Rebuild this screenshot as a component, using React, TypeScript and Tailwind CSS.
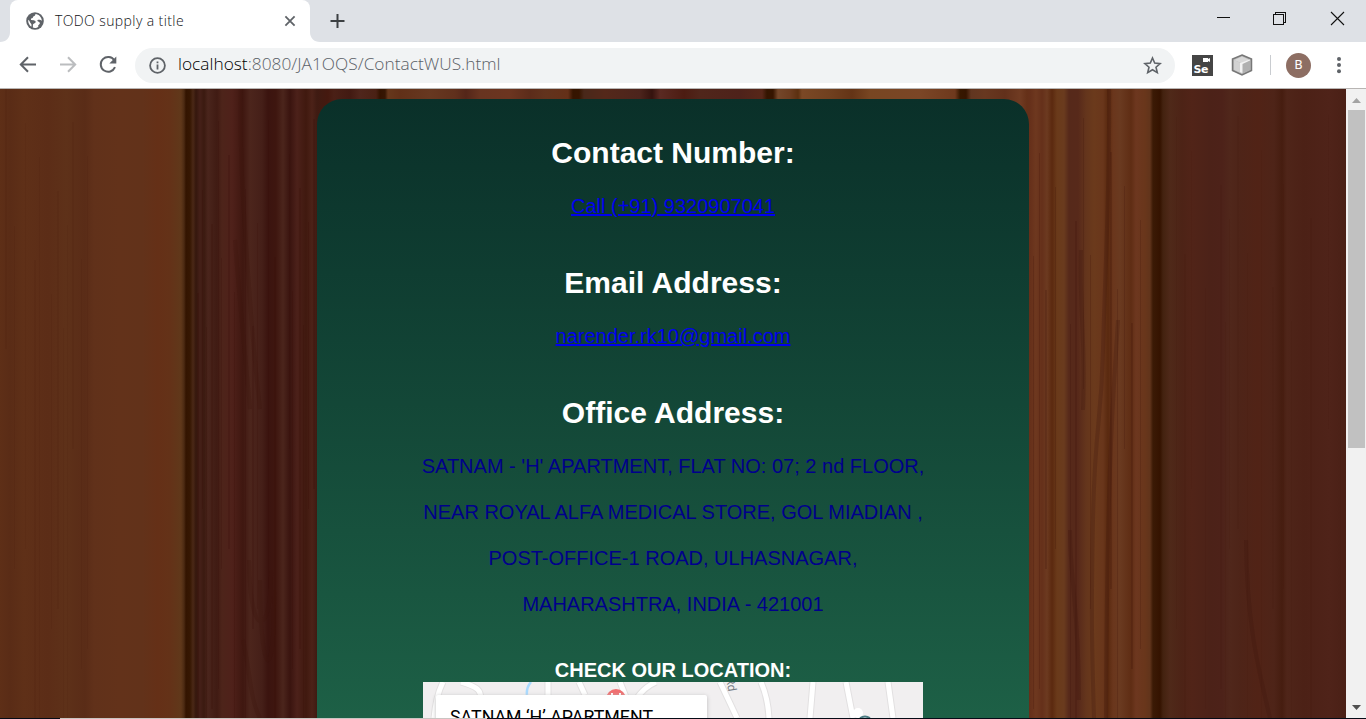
import React from "react";

type Stripe = [x: number, color: string];

const grain: Stripe[] = [
  [0, "#5e2f17"], [10, "#5a2c16"], [24, "#5f3018"], [48, "#5c2d17"], [66, "#5e3119"], [85, "#5a2c17"],
  [94, "#61311a"], [120, "#63321a"], [142, "#62321a"], [158, "#653017"], [170, "#643218"], [181, "#60381a"],
  [184, "#4c2a12"], [186, "#331400"], [190, "#361702"], [193, "#4a2816"], [196, "#35170d"], [200, "#452018"],
  [204, "#3b1a10"], [208, "#4a251c"], [217, "#401b13"], [222, "#4d241a"], [232, "#4f211a"], [243, "#3f1710"],
  [250, "#4c251c"], [262, "#451f18"], [268, "#3b140f"], [276, "#3e160f"], [283, "#4b251c"], [290, "#3a140f"],
  [297, "#4c211a"], [306, "#40190f"], [312, "#4c2218"], [317, "#3f1b12"],
  [328, "#45190f"], [334, "#4a2016"], [350, "#421a12"], [360, "#4f261c"], [376, "#4a2114"], [380, "#331300"],
  [385, "#361704"], [388, "#66381c"], [400, "#613018"], [430, "#673820"], [455, "#60301c"], [466, "#542619"],
  [480, "#683420"], [510, "#6c3520"], [530, "#5c2c1a"], [545, "#62331d"], [568, "#653018"], [573, "#351500"],
  [579, "#361500"], [584, "#49281a"], [605, "#54281a"], [640, "#4c241c"], [652, "#35130e"], [660, "#5a2a22"],
  [684, "#4c1c12"], [700, "#50261b"], [740, "#4e221a"], [762, "#572719"], [767, "#341500"], [773, "#361500"],
  [778, "#74472a"], [790, "#6c3d20"], [798, "#5c3010"], [802, "#7b4825"], [830, "#70401f"], [852, "#643416"],
  [870, "#784622"], [920, "#7b4626"], [955, "#6e391d"], [960, "#371800"], [966, "#351500"], [971, "#613620"],
  [985, "#683820"], [1005, "#62301b"], [1020, "#703b22"], [1027, "#653018"],
  [1030, "#66301a"], [1036, "#6e381f"], [1042, "#65301a"], [1047, "#6c3a20"], [1052, "#5b290f"],
  [1057, "#6a3a1a"], [1064, "#6a3b1e"], [1069, "#56291a"], [1078, "#57291a"], [1086, "#64351c"],
  [1094, "#6b3a1c"], [1103, "#69361b"], [1108, "#59290f"], [1113, "#6a361c"], [1120, "#6a3a20"],
  [1131, "#5f2d14"], [1136, "#6d371f"], [1145, "#69361b"], [1150, "#61341b"], [1153, "#3b1a05"],
  [1160, "#351300"], [1163, "#43220f"], [1170, "#4f2919"], [1182, "#4d2316"], [1192, "#512418"],
  [1210, "#4c2218"], [1222, "#4d2219"], [1230, "#50271b"], [1240, "#4e2418"], [1258, "#512316"],
  [1274, "#4e2418"], [1282, "#461d10"], [1287, "#4f2519"], [1304, "#4c2116"], [1330, "#4f2319"], [1346, "#4a2016"],
];

const fineLines = [
  5, 14, 25, 34, 39, 51, 57, 63, 67, 72, 81, 87, 197, 202, 206, 211, 218, 221, 228, 234, 245, 252, 257, 268, 274,
  289, 292, 299, 303, 308, 313, 1033, 1039, 1045, 1055, 1070, 1075, 1083, 1090, 1110, 1117, 1124, 1131, 1140,
  1176, 1184, 1191, 1205, 1220, 1225, 1229, 1237, 1247, 1261, 1272, 1283, 1291, 1310, 1328, 1340,
];

const knots = [
  "M241 88C239 160 245 230 250 300S257 380 260 409",
  "M235 240C240 310 246 360 250 409",
  "M271 570C272 635 250 645 249 560M260 580C260 680 275 690 274 590",
  "M243 640C250 670 250 700 260 718",
  "M1109 88C1110 190 1105 270 1103 350S1095 420 1093 520S1092 650 1094 718",
  "M1118 320C1114 390 1107 450 1106 718",
  "M1081 250C1079 310 1086 340 1083 410",
  "M1070 530C1070 580 1079 610 1079 700",
  "M1246 540C1247 620 1256 660 1270 718",
];

function WoodBackdrop() {
  return (
    <svg className="col-start-1 row-start-1 block h-[629px] w-[1346px]" viewBox="0 89 1346 629" aria-hidden="true">
      <defs>
        <linearGradient id="grain" gradientUnits="userSpaceOnUse" x1="0" y1="0" x2="1346" y2="0">
          {grain.map(([x, color]) => (
            <stop key={x} offset={x / 1346} stopColor={color} />
          ))}
        </linearGradient>
      </defs>
      <rect y="89" width="1346" height="629" fill="url(#grain)" />
      {fineLines.map((x, i) => (
        <rect key={x} x={x} y={89 + ((i * 137) % 240)} width={i % 3 ? 1 : 2} height={260 + ((i * 83) % 340)} fill="#3a0d05" opacity={x < 180 || x > 1165 ? 0.08 : 0.18} />
      ))}
      {knots.map((d) => (
        <path key={d} d={d} fill="none" stroke="#3a120a" strokeWidth="4" opacity="0.25" />
      ))}
    </svg>
  );
}

function TabStrip() {
  return (
    <header className="flex h-[42px] items-start bg-[#dee1e6]">
      <svg className="h-[42px] w-[10px]" viewBox="0 0 10 42"><path d="M10 32V42H0C6 42 10 38 10 32Z" fill="#fff" /></svg>
      <div className="flex h-[42px] w-[300px] items-center rounded-t-[8px] bg-white pb-px pl-4">
        <svg className="h-[18px] w-[18px]" viewBox="0 0 18 18">
          <circle cx="9" cy="9" r="8.8" fill="#5f6368" />
          <path d="M9.4 2C9.5 4.3 7.2 3.8 7 5.2C6.9 6.6 4.9 5.8 4.9 7.3C4.9 8.7 8.5 7.9 9.4 9.1C10.3 10.4 8.9 11.5 7.7 11.7C6.4 12 7.2 14.4 6.8 15.6C8.5 16.3 11 16 12.4 14.7C11.4 13.1 13.6 12.7 13.9 11.3C14.1 9.9 12.2 10 11.5 9C10.8 7.8 12.9 7.3 14.6 8.1L15.9 8.7C15.6 5.3 13 2.3 9.4 2ZM2.2 7.8C1.8 10.7 3.4 13.5 5.3 14.7C5.7 13.2 5.7 12.1 4.7 11.3C3.8 10.5 3.8 8.5 2.2 7.8Z" fill="#fff" />
        </svg>
        <span className="ml-[11px] w-[229px] whitespace-nowrap pb-px font-['Open_Sans',sans-serif] text-[14px] font-light tracking-[0.4px] text-[#101316]">TODO supply a title</span>
        <svg className="h-[12px] w-[12px] shrink-0" viewBox="0 0 12 12"><path d="M1.4 1.4L10.6 10.6M10.6 1.4L1.4 10.6" stroke="#5f6368" strokeWidth="1.8" /></svg>
      </div>
      <svg className="h-[42px] w-[10px]" viewBox="0 0 10 42"><path d="M0 32V42H10C4 42 0 38 0 32Z" fill="#fff" /></svg>
      <svg className="mt-[13px] ml-[10px] h-4 w-4" viewBox="0 0 16 16"><path d="M7.5 1V15M.5 8H14.5" stroke="#3c4043" strokeWidth="2" /></svg>
      <div className="ml-auto flex">
        <svg className="h-[36px] w-[150px]" viewBox="1216 0 150 36" fill="none" stroke="#111" shapeRendering="crispEdges">
          <path d="M1217 17.5H1230" />
          <path d="M1273.5 14.5H1283.5V24.5H1273.5ZM1275.5 14V12.5H1285.5V22.5H1284" />
          <path d="M1331 12L1344 25M1344 12L1331 25" shapeRendering="auto" strokeWidth="1.1" />
        </svg>
      </div>
    </header>
  );
}

function Toolbar() {
  return (
    <div className="flex h-[47px] items-center border-b border-[#b8b5b3] bg-white">
      <svg className="h-[46px] w-[135px]" viewBox="0 42 135 46" fill="none" stroke="#5f6368" strokeWidth="2">
        <path d="M36 64.5H21M28 57.2L20.8 64.5L28 71.8" />
        <path d="M60 64.5H75M68 57.2L75.2 64.5L68 71.8" stroke="#bbbdbf" />
        <path d="M114.3 60.2A7.4 7.4 0 1 0 115 67.2" />
        <path d="M116.3 56.5V63.5H109.3Z" fill="#5f6368" stroke="none" />
      </svg>
      <div className="flex h-[35px] w-[1040px] items-center rounded-full bg-[#f1f3f4] pr-[13px] pl-[14px]">
        <svg className="h-[17px] w-[17px] shrink-0" viewBox="0 0 17 17" fill="none" stroke="#5f6368" strokeWidth="1.8"><circle cx="8.5" cy="8.5" r="7.4" /><path d="M8.5 7.5V12.5M8.5 4.4V6.3" /></svg>
        <span className="ml-[12px] whitespace-nowrap pb-[2px] font-['Open_Sans',sans-serif] text-[17.3px] font-light tracking-[0.02px] text-[#5b6167]"><span className="text-black">localhost</span>:8080/JA1OQS/ContactWUS.html</span>
        <svg className="ml-auto h-[19px] w-[19px]" viewBox="0 0 19 19" fill="none" stroke="#5f6368" strokeWidth="1.6"><path d="M9.5 2L11.7 7.1L17.2 7.6L13 11.2L14.3 16.6L9.5 13.7L4.7 16.6L6 11.2L1.8 7.6L7.3 7.1Z" /></svg>
      </div>
      <div className="ml-[17px] flex h-[21px] w-[21px] items-end bg-[#454545]">
        <svg className="h-[21px] w-[21px]" viewBox="0 0 21 21"><path d="M11 3H16V4L18 3V7L16 6V7H11Z" fill="#fff" /><text x="1.5" y="18" fill="#fff" fontFamily="DejaVu Sans, sans-serif" fontSize="11" fontWeight="bold" textLength="15">Se</text></svg>
      </div>
      <svg className="ml-[18px] h-[22px] w-[22px]" viewBox="0 0 22 22">
        <path d="M11 1L20.5 5V16.5L11 21L1.5 16.5V5Z" fill="#b5b5b5" stroke="#777" strokeWidth="1.5" />
        <path d="M3 6L11 2.5L19 6L11 9.5Z" fill="#d8d8d8" />
        <path d="M3 6L11 9.5V19.5L3 15.8Z" fill="#d2d2d2" />
        <path d="M11 9.5L19 6V15.8L11 19.5Z" fill="#b0b0b0" />
        <path d="M9 9L19 5.5V6.5L11.5 10V19L9 18Z" fill="#f2f2f2" />
      </svg>
      <div className="ml-[17px] h-[20px] w-px bg-[#c9ccd0]" />
      <div className="ml-[15px] flex h-[25px] w-[25px] items-center justify-center rounded-full bg-[#8d6e63] font-['Roboto',sans-serif] text-[13px] text-white">B</div>
      <svg className="ml-[25px] h-5 w-[6px]" viewBox="0 0 6 20" fill="#5f6368"><circle cx="3" cy="4" r="2" /><circle cx="3" cy="10" r="2" /><circle cx="3" cy="16.2" r="2" /></svg>
    </div>
  );
}

const roads =
  "M20 0Q13 14 11 36M38 0C55 5 58 8 58 18M125 0V15M156 0L162 13M197 0L203 15M233 0C224 4 218 10 214 16M297 0L314 36M338 0Q345 16 346 36M390 0L387 36M423 0L430 36M465 0L470 36";

function MapPreview() {
  return (
    <div className="grid h-[36px] w-[500px] shrink-0 overflow-hidden bg-[#f1eff0]">
      <svg className="col-start-1 row-start-1 h-[36px] w-[500px]" viewBox="0 0 500 36" fill="none">
        <path d={roads} stroke="#e2e0e1" strokeWidth="7" />
        <path d={roads} stroke="#fff" strokeWidth="5" />
        <path d="M108 0Q103 6 104 13" stroke="#a9daff" strokeWidth="2.5" />
        <circle cx="193" cy="17" r="10" fill="#f06f70" /><path d="M189 11V16M197 11V16" stroke="#fff" strokeWidth="2" />
        <circle cx="435" cy="31" r="5" fill="#fff" /><path d="M437 36Q442 33 447 36" stroke="#4b7c83" strokeWidth="2" />
        <text x="0" y="0" transform="translate(303 -4) rotate(80)" fill="#737b83" fontFamily="Roboto, sans-serif" fontSize="12">Rd</text>
      </svg>
      <div className="z-10 col-start-1 row-start-1 mt-[13px] ml-[13px] h-[40px] w-[271px] rounded-t-[2px] bg-white pt-[12px] pl-[14px] font-['Roboto',sans-serif] text-[17.8px] leading-[20px] whitespace-nowrap text-black shadow-[0_1px_4px_#bbb]">SATNAM ‘H’ APARTMENT</div>
    </div>
  );
}

const address = [
  "SATNAM - 'H' APARTMENT, FLAT NO: 07; 2 nd FLOOR,",
  "NEAR ROYAL ALFA MEDICAL STORE, GOL MIADIAN ,",
  "POST-OFFICE-1 ROAD, ULHASNAGAR,",
  "MAHARASHTRA, INDIA - 421001",
];

function ContactCard() {
  return (
    <main className="z-10 col-start-1 row-start-1 mt-[10px] ml-[317px] flex h-[619px] w-[712px] flex-col items-center overflow-hidden rounded-t-[25px] bg-linear-to-b from-[#0a3029] to-[#1d6046] pt-[35px] font-['Liberation_Sans',Arial,sans-serif] text-[20px] text-[#00008b]">
      <h1 className="h-[61px] text-[30px] leading-[37px] font-bold text-white">Contact Number:</h1>
      <a className="h-[69px] leading-[23px] text-[#0000ee] underline" href="#call">Call (+91) 9320907041</a>
      <h1 className="h-[61px] text-[30px] leading-[37px] font-bold text-white">Email Address:</h1>
      <a className="h-[69px] leading-[23px] text-[#0000ee] underline" href="#email">narender.rk10@gmail.com</a>
      <h1 className="h-[49px] text-[30px] leading-[37px] font-bold text-white">Office Address:</h1>
      {address.map((line) => (
        <p key={line} className="h-[46px] shrink-0 leading-[46px] whitespace-nowrap">{line}</p>
      ))}
      <h2 className="mt-[32px] h-[23px] shrink-0 leading-[23px] font-bold text-white">CHECK OUR LOCATION:</h2>
      <MapPreview />
    </main>
  );
}

function Scrollbar() {
  return (
    <div className="flex h-[629px] w-[20px] flex-col items-center bg-[#f1f1f1]">
      <svg className="h-[21px] w-5" viewBox="0 0 20 21"><path d="M6 14L10.5 9L15 14Z" fill="#a3a3a3" /></svg>
      <div className="ml-px h-[338px] w-[17px] bg-[#c1c1c1]" />
      <svg className="mt-auto h-[21px] w-5" viewBox="0 0 20 21"><path d="M6 8H15L10.5 13Z" fill="#505050" /></svg>
    </div>
  );
}

export default function App() {
  return (
    <div className="h-[719px] w-[1366px] overflow-hidden">
      <TabStrip />
      <Toolbar />
      <div className="flex">
        <div className="grid w-[1346px]"><WoodBackdrop /><ContactCard /></div>
        <Scrollbar />
      </div>
      <div className="flex h-px bg-[#050b16]"><div className="ml-[60px] h-px w-[427px] bg-[#c9c5c2]" /></div>
    </div>
  );
}
